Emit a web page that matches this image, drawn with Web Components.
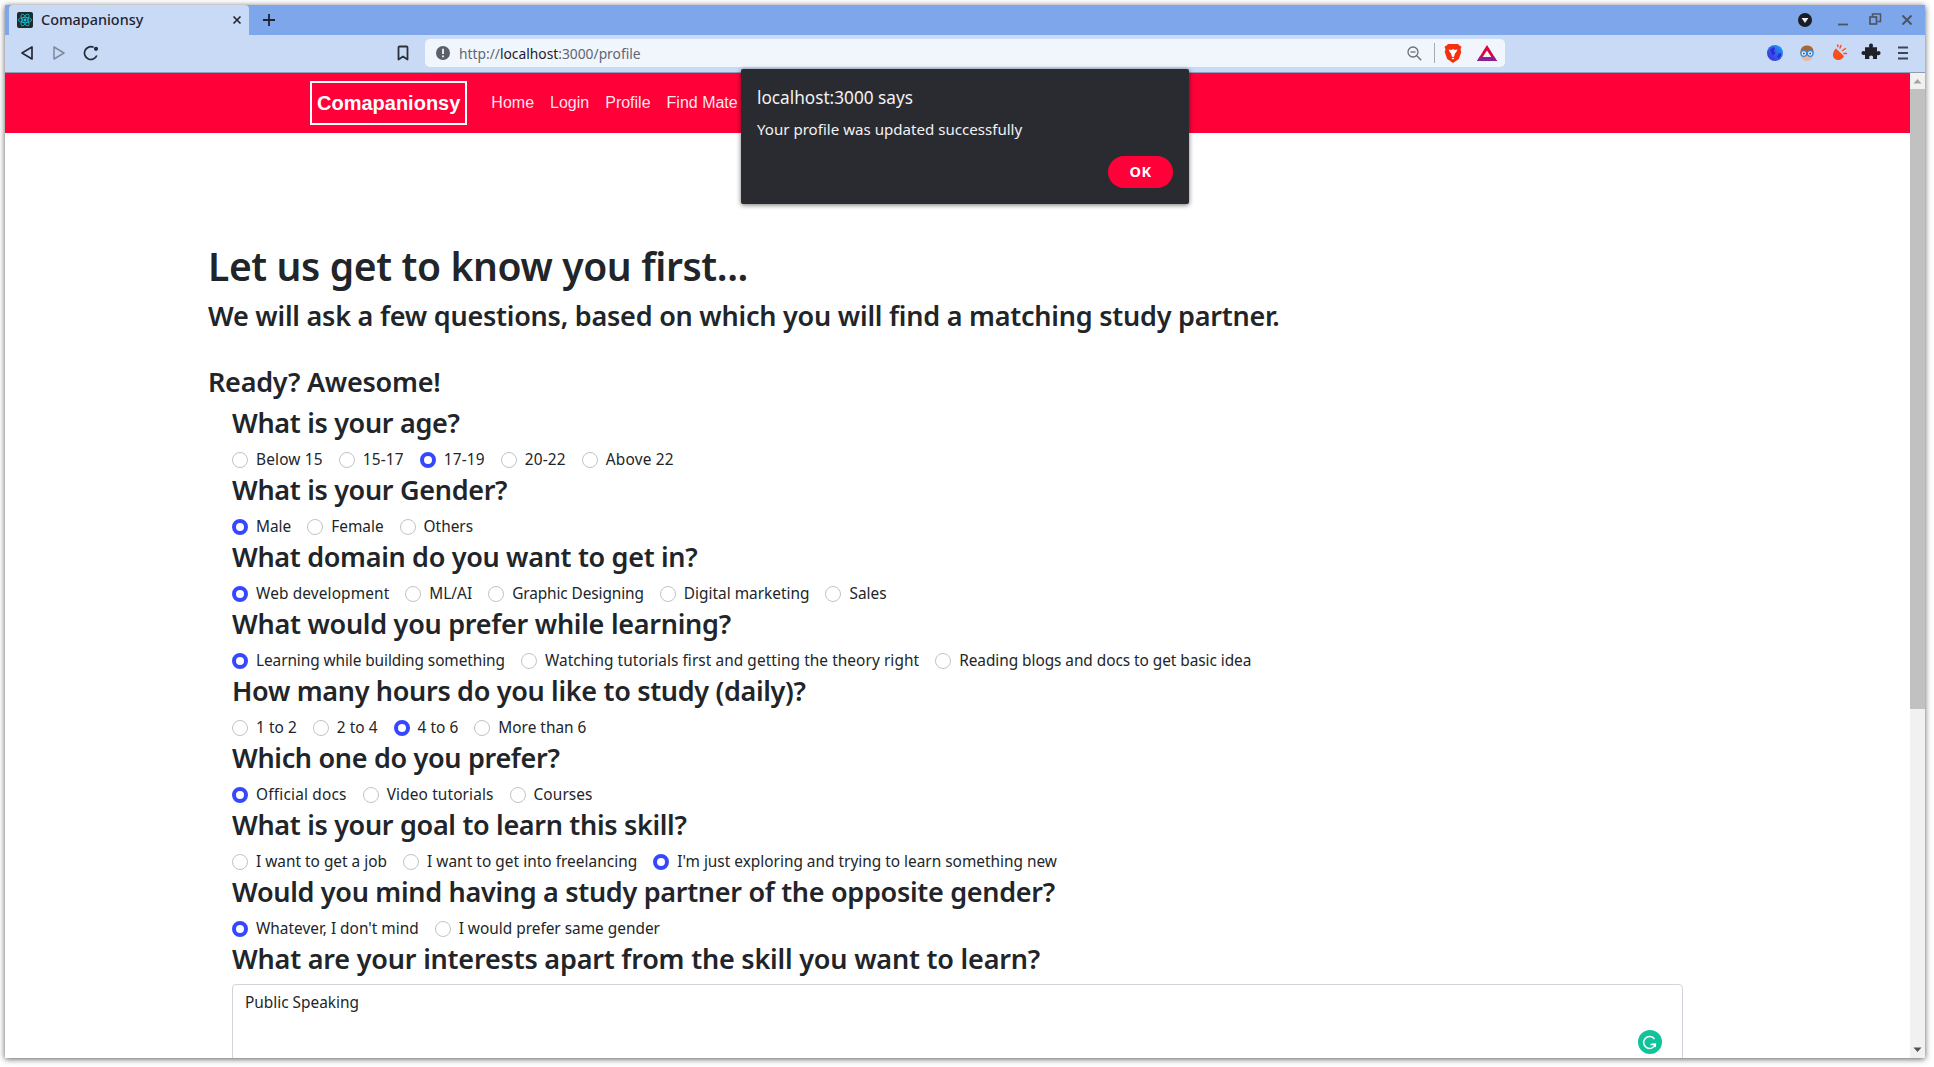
<!DOCTYPE html>
<html lang="en"><head><meta charset="utf-8"><title>Comapanionsy</title>
<style>
html,body{margin:0;padding:0;background:#fff;overflow:hidden;height:100%}
body{padding:5px 9px 9px 5px;box-sizing:border-box;font-family:"Noto Sans",sans-serif;color:#212529}
</style></head><body>
<browser-window>
  <tab-strip slot="top"></tab-strip>
  <nav-toolbar slot="top"></nav-toolbar>
  <app-navbar></app-navbar>
  <profile-page>
    <form-question heading="What is your age?">
      <radio-option style="letter-spacing:.17px">Below 15</radio-option><radio-option style="letter-spacing:.17px">15-17</radio-option><radio-option checked style="letter-spacing:.17px">17-19</radio-option><radio-option style="letter-spacing:.17px">20-22</radio-option><radio-option style="letter-spacing:.17px">Above 22</radio-option>
    </form-question>
    <form-question heading="What is your Gender?">
      <radio-option checked>Male</radio-option><radio-option>Female</radio-option><radio-option>Others</radio-option>
    </form-question>
    <form-question heading="What domain do you want to get in?">
      <radio-option checked style="letter-spacing:.13px">Web development</radio-option><radio-option>ML/AI</radio-option><radio-option style="letter-spacing:-.1px">Graphic Designing</radio-option><radio-option>Digital marketing</radio-option><radio-option>Sales</radio-option>
    </form-question>
    <form-question heading="What would you prefer while learning?" style="--ls:-.27px">
      <radio-option checked style="letter-spacing:-.08px">Learning while building something</radio-option><radio-option style="letter-spacing:.07px">Watching tutorials first and getting the theory right</radio-option><radio-option style="letter-spacing:-.05px">Reading blogs and docs to get basic idea</radio-option>
    </form-question>
    <form-question heading="How many hours do you like to study (daily)?">
      <radio-option style="letter-spacing:.05px">1 to 2</radio-option><radio-option style="letter-spacing:.05px">2 to 4</radio-option><radio-option checked style="letter-spacing:.05px">4 to 6</radio-option><radio-option>More than 6</radio-option>
    </form-question>
    <form-question heading="Which one do you prefer?">
      <radio-option checked style="letter-spacing:.2px">Official docs</radio-option><radio-option style="letter-spacing:.13px">Video tutorials</radio-option><radio-option style="letter-spacing:.1px">Courses</radio-option>
    </form-question>
    <form-question heading="What is your goal to learn this skill?">
      <radio-option>I want to get a job</radio-option><radio-option style="letter-spacing:.04px">I want to get into freelancing</radio-option><radio-option checked>I'm just exploring and trying to learn something new</radio-option>
    </form-question>
    <form-question heading="Would you mind having a study partner of the opposite gender?" style="--ls:-.3px">
      <radio-option checked>Whatever, I don't mind</radio-option><radio-option>I would prefer same gender</radio-option>
    </form-question>
    <form-question heading="What are your interests apart from the skill you want to learn?" style="--ls:-.2px">
      <text-box>Public Speaking</text-box>
    </form-question>
  </profile-page>
  <alert-dialog slot="over"></alert-dialog>
</browser-window>
<script>
function def(name, html, init){
  customElements.define(name, class extends HTMLElement{
    constructor(){super();const r=this.attachShadow({mode:'open'});r.innerHTML=typeof html==='function'?html(this):html;}
    connectedCallback(){ if(init) init(this); }
  });
}
const F='"Noto Sans",sans-serif';
def('browser-window',`<style>
:host{display:flex;flex-direction:column;position:relative;width:1920px;height:1053px;overflow:hidden;box-shadow:0 1px 6px rgba(0,0,0,.65);background:#fff}
.body{flex:1;display:flex;min-height:0}
.page{flex:1;min-width:0;overflow:hidden;display:flex;flex-direction:column}
</style><slot name="top"></slot>
<div class="body"><div class="page"><slot></slot></div><scroll-bar></scroll-bar></div>
<slot name="over"></slot>`);

def('tab-strip',`<style>
:host{display:flex;align-items:flex-end;height:30px;background:#7ea6ea;padding-left:4px;flex:none}
.tab{width:240px;height:30px;box-sizing:border-box;background:#c9daf6;border-radius:4px 4px 0 0;display:flex;align-items:center;padding:0 0 1px 8px;color:#1f2430;font:500 14.4px ${F}}
.fav{width:16px;height:16px;margin-right:8px;flex:none}
.t{flex:1}
.x{width:24px;height:24px;margin-right:0;flex:none;display:block}
.plus{margin-left:8px;width:24px;height:24px;flex:none;display:block;align-self:center}
.sp{flex:1}
.ctl{display:flex;align-items:center;height:30px;padding-right:2.5px}
.ctl svg{display:block;width:32px;height:30px}
</style>
<div class="tab">
<svg class="fav" viewBox="0 0 16 16"><rect width="16" height="16" rx="2" fill="#1d2b2e"/><g fill="none" stroke="#12c4d8" stroke-width=".8"><ellipse cx="8" cy="8" rx="6.6" ry="2.6"/><ellipse cx="8" cy="8" rx="6.6" ry="2.6" transform="rotate(60 8 8)"/><ellipse cx="8" cy="8" rx="6.6" ry="2.6" transform="rotate(120 8 8)"/></g><circle cx="8" cy="8" r="1.4" fill="#12c4d8"/></svg>
<span class="t">Comapanionsy</span>
<svg class="x" viewBox="0 0 24 24"><path d="M8.5 8.5l7 7M15.5 8.5l-7 7" stroke="#1f2430" stroke-width="1.6" fill="none"/></svg>
</div>
<svg class="plus" viewBox="0 0 24 24"><path d="M12 6v12M6 12h12" stroke="#1f2430" stroke-width="1.8" fill="none"/></svg>
<div class="sp"></div>
<div class="ctl">
<svg viewBox="0 0 32 30"><circle cx="16" cy="15" r="7" fill="#1b1d24"/><path d="M12.6 13h6.8L16 18z" fill="#e8eefb"/></svg>
<svg viewBox="0 0 32 30" style="margin-left:6px"><path d="M11 19.5h10" stroke="#4c5566" stroke-width="1.8"/></svg>
<svg viewBox="0 0 32 30"><path d="M13.5 11.5v-2.5h8v7.5h-3" fill="none" stroke="#4c5566" stroke-width="1.5"/><rect x="11" y="12" width="6.5" height="7" fill="none" stroke="#4c5566" stroke-width="1.7"/></svg>
<svg viewBox="0 0 32 30"><path d="M11.5 10.5l9 9M20.500 10.500l-9 9" stroke="#4c5566" stroke-width="2" fill="none"/></svg>
</div>`);

def('nav-toolbar',`<style>
:host{display:flex;align-items:center;height:38px;box-sizing:border-box;background:#c9daf6;border-bottom:1px solid #8c9db5;padding:0 6px 1px;flex:none}
.b{width:32px;height:32px;flex:none;display:flex;align-items:center;justify-content:center}
.b svg{display:block;width:24px;height:24px}
.sp{flex:1}
.url{width:1080px;height:28px;flex:none;background:#f1f6fd;border-radius:5px;display:flex;align-items:center;box-sizing:border-box;margin-left:6px;padding:0 2px 0 8px;font:13.8px ${F};color:#5e6675;white-space:nowrap}
.url b{font-weight:400;color:#20242c}
.info{width:20px;height:20px;margin-right:6px;flex:none}
.g{flex:1}
.url svg{flex:none;display:block}
.div{width:1px;height:20px;background:#a4aab3;margin:0 8px 0 10px;flex:none}
.gap{width:254px;flex:none}
</style>
<div class="b"><svg viewBox="0 0 24 24"><path d="M17 6v12L7 12z" fill="none" stroke="#252a33" stroke-width="1.7" stroke-linejoin="round"/></svg></div>
<div class="b"><svg viewBox="0 0 24 24"><path d="M7 6v12l10-6z" fill="none" stroke="#7f8a9c" stroke-width="1.5" stroke-linejoin="round"/></svg></div>
<div class="b"><svg viewBox="0 0 24 24"><path d="M17.800 14.500A6.400 6.400 0 1 1 14.600 6.300" fill="none" stroke="#252a33" stroke-width="1.7"/><circle cx="17" cy="7.800" r="2.100" fill="#252a33"/></svg></div>
<div class="sp"></div>
<div class="b"><svg viewBox="0 0 24 24"><path d="M7.500 6.500a1 1 0 0 1 1-1h7a1 1 0 0 1 1 1v12l-4.500-3-4.500 3z" fill="none" stroke="#2b303a" stroke-width="1.800" stroke-linejoin="round"/></svg></div>
<div class="url">
<svg class="info" viewBox="0 0 20 20"><circle cx="10" cy="10" r="7" fill="#5c6068"/><path d="M10 5.800v5.200M10 12.500v1.800" stroke="#f1f6fd" stroke-width="1.800"/></svg>
<span>http://<b>localhost</b>:3000/profile</span><span class="g"></span>
<svg width="20" height="20" viewBox="0 0 20 20"><circle cx="9" cy="9" r="5" fill="none" stroke="#6b7078" stroke-width="1.300"/><path d="M6.500 9h5" stroke="#6b7078" stroke-width="1.300"/><path d="M12.800 12.800l4.400 4.400" stroke="#6b7078" stroke-width="1.400"/></svg>
<span class="div"></span>
<svg width="20" height="22" viewBox="0 0 20 22"><path d="M5 2h10l2 2 1.500.5-1 3 .8 2.500-2.500 7L10 21l-5.800-4-2.500-7 .8-2.500-1-3L3 4z" fill="#f6300f"/><path d="M5.500 7.500l3 .5L10 7l1.500 1 3-.5-1.500 3-1 .8-.8 3L10 15.500 8.800 14.300 8 11.300l-1-.8z" fill="#fff"/><path d="M8.500 16h3L10 17.500z" fill="#fff"/></svg>
<svg width="24" height="22" viewBox="0 0 24 22" style="margin:0 4.500px 0 12px"><path d="M12 3L22 19H2z" fill="#e0003c"/><path d="M2 19h20l-2.800-4.400H4.800z" fill="#8e1f8e"/><path d="M12 8.500l4.300 6.500H7.700z" fill="#f1f6fd"/></svg>
</div>
<div class="gap"></div>
<div class="b"><svg viewBox="0 0 24 24"><defs><linearGradient id="gl" x1="1" y1="0" x2="0" y2="1"><stop offset="0" stop-color="#1ea0f6"/><stop offset=".55" stop-color="#2a5fe8"/><stop offset="1" stop-color="#4a1cd8"/></linearGradient></defs><circle cx="12" cy="12" r="8" fill="url(#gl)"/><path d="M7 9l3-3 2 1.500-1 2.500 1.500 2-2 2.500-1.500-1-.8-2.500zM15 13l3-1 .2 2.500-2.500 3-1.500-1z" fill="#3327d8"/></svg></div>
<div class="b"><svg viewBox="0 0 24 24"><path d="M5.500 11c0-4.500 3-6.500 6.500-6.500s6.500 2 6.500 6.500v2h-13z" fill="#a8682f"/><ellipse cx="12" cy="15.500" rx="5.500" ry="4.500" fill="#f0b59a"/><circle cx="8.800" cy="12.500" r="2.800" fill="#fff" stroke="#2f8ae6" stroke-width="1.300"/><circle cx="15.200" cy="12.500" r="2.800" fill="#fff" stroke="#2f8ae6" stroke-width="1.300"/><circle cx="8.800" cy="12.500" r="1" fill="#1d4f91"/><circle cx="15.200" cy="12.500" r="1" fill="#1d4f91"/></svg></div>
<div class="b"><svg viewBox="0 0 24 24"><path d="M9 7.500l8 7.500c-1 3-4 4.500-6.500 4-3-.5-5-3-4.500-6 .2-2 1.500-4.500 3-5.500z" fill="#f7501a"/><path d="M13 7l1-2.500M15.500 9.500l3-2M17 12.500h2.500M11 5.500l-.3-1.500" stroke="#f7501a" stroke-width="1.500" fill="none" stroke-linecap="round"/></svg></div>
<div class="b"><svg viewBox="0 0 24 24"><path d="M10 4.500a2 2 0 0 1 4 .2c0 .6-.3 1-.3 1.500h4.300v4.200c.5 0 1-.4 1.500-.4a2 2 0 0 1 0 4.200c-.5 0-1-.3-1.500-.3V18h-4.200c0-.5.4-1 .4-1.500a2 2 0 0 0-4.100 0c0 .5.400 1 .400 1.500H6v-4.200c-.5 0-1 .3-1.500.3a2 2 0 0 1 0-4.100c.5 0 1 .3 1.500.3V6.200h4.300c0-.5-.3-1-.3-1.700z" fill="#1f2126"/></svg></div>
<div class="b"><svg viewBox="0 0 24 24"><path d="M7 6.500h10M7 12h10M7 17.500h10" stroke="#3d4654" stroke-width="2"/></svg></div>`);

def('app-navbar',`<style>
:host{display:flex;align-items:center;height:60px;background:#ff0039;padding-left:305px;flex:none;font-family:"Liberation Sans",Arial,sans-serif;color:#fff}
.brand{border:2px solid #fff;height:44px;box-sizing:border-box;padding:0 5px;display:flex;align-items:center;font-weight:700;font-size:20px;margin-right:16px}
a{padding:0 8px;font-size:16px;color:rgba(255,255,255,.92);text-decoration:none}
</style><span class="brand">Comapanionsy</span><a>Home</a><a>Login</a><a>Profile</a><a>Find Mate</a>`);

def('profile-page',`<style>
:host{display:block;padding:109px 0 0 203px;width:1704px;box-sizing:border-box}
h1,h2{margin:0;font-weight:600;color:#212529}
h1{font-size:39px;line-height:48px;letter-spacing:-.37px}
h2{font-size:27px;line-height:34px;margin-top:9px;letter-spacing:-.23px}
h2.r{margin-top:32px;letter-spacing:-.25px}
.q{padding-left:24px;margin-top:7px}
</style><h1>Let us get to know you first...</h1>
<h2>We will ask a few questions, based on which you will find a matching study partner.</h2>
<h2 class="r">Ready? Awesome!</h2>
<div class="q"><slot></slot></div>`);

def('form-question',h=>`<style>
:host{display:block;height:67px}
h3{margin:0 0 8px;font-size:27px;line-height:33.600px;font-weight:600;color:#212529;letter-spacing:var(--ls,-.32px);white-space:nowrap}
.o{display:flex;min-height:24px;align-items:center}
</style><h3>${h.getAttribute('heading')}</h3><div class="o"><slot></slot></div>`);

def('radio-option',`<style>
:host{display:inline-flex;align-items:center;margin-right:16px;font-size:15.400px;color:#212529;white-space:nowrap;line-height:24px}
i{width:16px;height:16px;box-sizing:border-box;border-radius:50%;border:1px solid #c0c4c8;margin-right:8px;flex:none;background:#fff}
:host([checked]) i{border:4px solid #3547ff}
</style><i></i><slot></slot>`);

def('text-box',`<style>
:host{display:block;position:relative;width:1451px;height:120px;box-sizing:border-box;border:1px solid #ced4da;border-radius:4px;padding:6px 12px;font-size:15.400px;line-height:24px;color:#212529;margin-top:.5px;align-self:flex-start}
svg{position:absolute;left:1405px;top:45px}
</style><slot></slot><svg width="24" height="24" viewBox="0 0 24 24"><circle cx="12" cy="12" r="12" fill="#11c39b"/><path d="M16.500 9a6 6 0 1 0 .8 5.500H12.500" fill="none" stroke="#fff" stroke-width="1.500"/><path d="M18 17.500v-4h-4z" fill="#fff"/></svg>`);

def('scroll-bar',`<style>
:host{display:flex;flex-direction:column;align-items:center;width:15px;background:#f1f1f1;flex:none}
.a{height:16px;width:15px;display:flex;align-items:center;justify-content:center;flex:none}
.th{width:15px;height:620px;background:#c1c1c1;flex:none}
.sp{flex:1}
</style><div class="a"><svg width="9" height="6"><path d="M4.500 1L8.500 5.500H.5z" fill="#a3a3a3"/></svg></div><div class="th"></div><div class="sp"></div><div class="a"><svg width="9" height="6"><path d="M4.500 5L8.500.5H.5z" fill="#505050"/></svg></div>`);

def('alert-dialog',`<style>
:host{position:absolute;left:736px;top:64px;width:448px;height:135px;box-sizing:border-box;background:#2a2b30;border-radius:2px;box-shadow:0 1px 5px rgba(0,0,0,.55);padding:16px;display:flex;flex-direction:column;color:#f2f2f4}
.t{font-size:17.200px;line-height:24px;margin-bottom:9px;padding-top:.5px}
.m{font-size:15.100px;line-height:20px}
.f{margin-top:auto;display:flex;justify-content:flex-end}
button{width:65px;height:32px;border:0;border-radius:16px;background:#ff0039;color:#fff;font:700 14.500px ${F};letter-spacing:.5px;padding:0 0 2px}
</style><div class="t">localhost:3000 says</div><div class="m">Your profile was updated successfully</div><div class="f"><button>OK</button></div>`);
</script>
</body></html>
